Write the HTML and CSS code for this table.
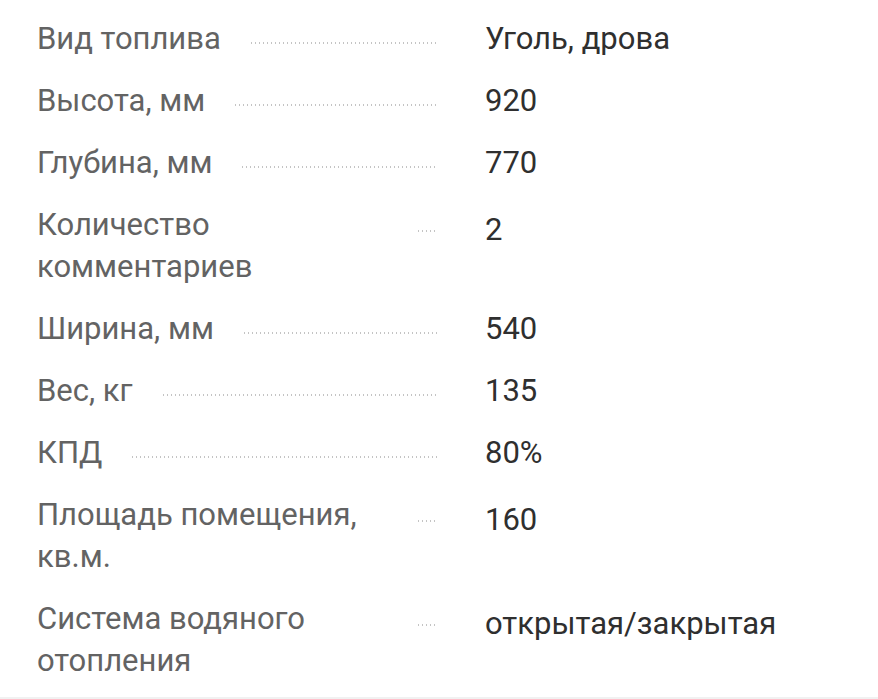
FILE: index.html
```html
<!DOCTYPE html>
<html lang="ru">
<head>
<meta charset="utf-8">
<title>Характеристики</title>
<link rel="stylesheet" href="styles.css">
</head>
<body>
<div class="specs">
  <div class="row"><div class="name"><span class="label">Вид топлива</span><span class="leader"></span></div><div class="value">Уголь, дрова</div></div>
  <div class="row"><div class="name"><span class="label">Высота, мм</span><span class="leader"></span></div><div class="value">920</div></div>
  <div class="row"><div class="name"><span class="label">Глубина, мм</span><span class="leader"></span></div><div class="value">770</div></div>
  <div class="row multi"><div class="name"><span class="label">Количество комментариев</span><span class="leader"></span></div><div class="value">2</div></div>
  <div class="row"><div class="name"><span class="label">Ширина, мм</span><span class="leader"></span></div><div class="value">540</div></div>
  <div class="row"><div class="name"><span class="label">Вес, кг</span><span class="leader"></span></div><div class="value">135</div></div>
  <div class="row"><div class="name"><span class="label">КПД</span><span class="leader"></span></div><div class="value">80%</div></div>
  <div class="row multi"><div class="name"><span class="label">Площадь помещения, кв.м.</span><span class="leader"></span></div><div class="value">160</div></div>
  <div class="row multi"><div class="name"><span class="label">Система водяного отопления</span><span class="leader"></span></div><div class="value">открытая/закрытая</div></div>
</div>
</body>
</html>
```
FILE: styles.css
```css
html, body {
  margin: 0;
  padding: 0;
  background: #ffffff;
}

body {
  font-family: Roboto, "Liberation Sans", Arial, sans-serif;
  font-size: 31px;
  line-height: 42px;
  height: 699px;
  overflow: hidden;
}

.specs {
  padding: 8px 0 5px 37px;
  border-bottom: 2px solid #f1f1f1;
}

.row {
  display: grid;
  grid-template-columns: 401px 1fr;
  column-gap: 47px;
  padding: 10px 0;
}

.name {
  display: flex;
  align-items: flex-start;
}

.label {
  color: #636363;
  flex: 0 1 auto;
}

.leader {
  flex: 1 0 20px;
  min-width: 20px;
  margin-left: 30px;
  margin-top: 24px;
  height: 2px;
  background-image: linear-gradient(to right, #c4c4c4 0, #c4c4c4 1.5px, transparent 1.5px);
  background-size: 4px 2px;
  background-repeat: repeat-x;
}

.multi .leader {
  margin-top: 26px;
}

.value {
  color: #2f2f2f;
}

.multi .value {
  padding-top: 5px;
}
```
